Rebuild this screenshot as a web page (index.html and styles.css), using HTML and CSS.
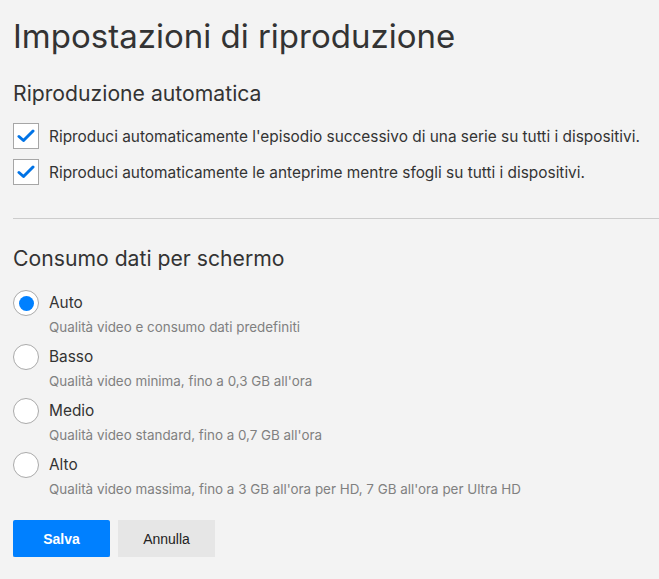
FILE: index.html
```html
<!DOCTYPE html>
<html>
<head>
  <title>Impostazioni di riproduzione</title>
  <link rel="stylesheet" href="styles.css">
</head>
<body>
  <div class="container">
    <h1>Impostazioni di riproduzione</h1>

    <div class="section">
      <h2>Riproduzione automatica</h2>
      <label class="check-row">
        <span class="checkbox">
          <svg width="18" height="14" viewBox="0 0 18 14"><path d="M2 7.5 L6.5 11.5 L16 2" fill="none" stroke="#0073e6" stroke-width="3" stroke-linecap="round" stroke-linejoin="round"/></svg>
        </span>
        <span class="check-label">Riproduci automaticamente l'episodio successivo di una serie su tutti i dispositivi.</span>
      </label>
      <label class="check-row">
        <span class="checkbox">
          <svg width="18" height="14" viewBox="0 0 18 14"><path d="M2 7.5 L6.5 11.5 L16 2" fill="none" stroke="#0073e6" stroke-width="3" stroke-linecap="round" stroke-linejoin="round"/></svg>
        </span>
        <span class="check-label">Riproduci automaticamente le anteprime mentre sfogli su tutti i dispositivi.</span>
      </label>
    </div>

    <hr class="divider">

    <div class="section">
      <h2 class="data-title">Consumo dati per schermo</h2>
      <div class="radio-row">
        <span class="radio selected"></span>
        <div class="radio-text">
          <div class="radio-label">Auto</div>
          <div class="radio-desc">Qualità video e consumo dati predefiniti</div>
        </div>
      </div>
      <div class="radio-row">
        <span class="radio"></span>
        <div class="radio-text">
          <div class="radio-label">Basso</div>
          <div class="radio-desc">Qualità video minima, fino a 0,3 GB all'ora</div>
        </div>
      </div>
      <div class="radio-row">
        <span class="radio"></span>
        <div class="radio-text">
          <div class="radio-label">Medio</div>
          <div class="radio-desc">Qualità video standard, fino a 0,7 GB all'ora</div>
        </div>
      </div>
      <div class="radio-row">
        <span class="radio"></span>
        <div class="radio-text">
          <div class="radio-label">Alto</div>
          <div class="radio-desc">Qualità video massima, fino a 3 GB all'ora per HD, 7 GB all'ora per Ultra HD</div>
        </div>
      </div>
    </div>

    <div class="actions">
      <button class="btn btn-primary">Salva</button>
      <button class="btn btn-secondary">Annulla</button>
    </div>
  </div>
</body>
</html>
```

FILE: styles.css
```css
body {
  margin: 0;
  background-color: #f3f3f3;
  font-family: Inter, "Noto Sans", sans-serif;
  color: #333;
}

.container {
  padding: 16px 0 0 13px;
}

h1 {
  margin: 0 0 23px;
  font-size: 33px;
  font-weight: 400;
  line-height: 40px;
}

h2 {
  margin: 0 0 16px;
  font-size: 21.2px;
  font-weight: 400;
  line-height: 28px;
}

.check-row {
  display: flex;
  align-items: center;
  height: 26px;
  margin-bottom: 10px;
  white-space: nowrap;
}

.checkbox {
  flex: none;
  width: 24px;
  height: 24px;
  border: 1px solid #a6a6a6;
  background: #fff;
  display: flex;
  align-items: center;
  justify-content: center;
  margin-right: 10px;
}

.check-label {
  font-size: 15.4px;
}

.divider {
  border: none;
  border-top: 1px solid #ccc;
  margin: 33px 0 25px;
}

.data-title {
  margin-bottom: 18px;
}

.radio-row {
  display: flex;
  align-items: flex-start;
  height: 54px;
}

.radio {
  flex: none;
  box-sizing: border-box;
  width: 26px;
  height: 26px;
  border: 1px solid #aaa;
  border-radius: 50%;
  background: #fff;
  margin-right: 10px;
  display: flex;
  align-items: center;
  justify-content: center;
}

.radio.selected::after {
  content: "";
  width: 15px;
  height: 15px;
  border-radius: 50%;
  background: #0080ff;
}

.radio-label {
  font-size: 15.4px;
  line-height: 26px;
}

.radio-desc {
  font-size: 13.4px;
  line-height: 22px;
  color: #808080;
}

.actions {
  display: flex;
  gap: 8px;
  margin-top: 14px;
}

.btn {
  width: 97px;
  height: 37px;
  border: none;
  font-family: "Liberation Sans", Arial, sans-serif;
  font-size: 14px;
  cursor: pointer;
}

.btn-primary {
  background-color: #0080ff;
  color: #fff;
  font-weight: bold;
  border-radius: 2px;
  box-shadow: 0 1px 0 rgba(0, 0, 0, 0.2);
}

.btn-secondary {
  background-color: #e6e6e6;
  color: #222;
  box-shadow: 0 1px 0 rgba(0, 0, 0, 0.2);
}
```
